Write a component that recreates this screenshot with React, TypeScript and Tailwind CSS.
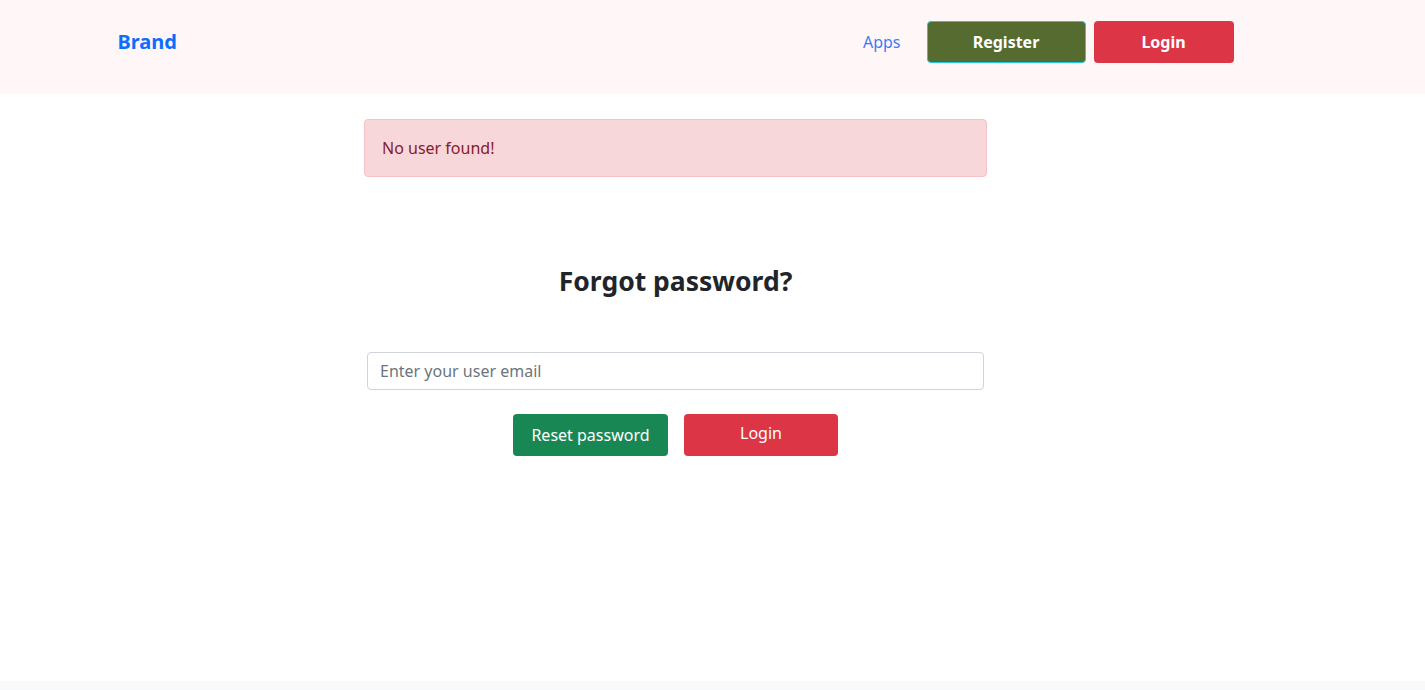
export default function App() {
  return (
    <div className="min-h-screen bg-white font-['Noto_Sans',sans-serif] text-[#212529]">
      {/* Navbar */}
      <header className="h-[94px] bg-[#fff7f7]">
        <div className="w-[1351px]">
          <div className="mx-auto flex w-[1140px] items-center justify-between px-[12px] pt-[21px]">
            <a href="#" className="text-[20px] font-bold text-[#0d6efd]">
              Brand
            </a>
            <nav className="flex items-center">
              <a href="#" className="mr-[26px] text-[16px] text-[#3b7cf5]">
                Apps
              </a>
              <button className="h-[42px] w-[159px] rounded-[4px] border border-[#1fc8e0] bg-[#556b2f] text-[16px] font-bold text-white">
                Register
              </button>
              <button className="ml-[8px] h-[42px] w-[140px] rounded-[4px] bg-[#dc3545] text-[16px] font-bold text-white">
                Login
              </button>
            </nav>
          </div>
        </div>
      </header>

      {/* Main */}
      <main className="h-[587px] w-[1351px]">
        <div className="mx-auto flex w-[623px] flex-col items-center pt-[25px]">
          <div className="w-full rounded-[4px] border border-[#f5c2c7] bg-[#f8d7da] px-[17px] py-[16px] text-[16px] leading-[24px] text-[#842029]">
            No user found!
          </div>

          <h3 className="mt-[88px] text-[26.5px] font-bold leading-[32px] text-[#212529]">
            Forgot password?
          </h3>

          <form className="mt-[55px] w-full px-[3px]" onSubmit={(e) => e.preventDefault()}>
            <input
              type="email"
              placeholder="Enter your user email"
              className="h-[38px] w-full rounded-[4px] border border-[#ced4da] px-[12px] text-[16px] text-[#212529] outline-none placeholder:text-[#6c757d]"
            />
            <div className="mt-[24px] flex justify-center gap-[16px]">
              <button
                type="submit"
                className="h-[42px] w-[155px] rounded-[4px] bg-[#198754] text-[16px] text-white"
              >
                Reset password
              </button>
              <button
                type="button"
                className="h-[42px] w-[154px] rounded-[4px] bg-[#dc3545] pb-[4px] text-[16px] text-white"
              >
                Login
              </button>
            </div>
          </form>
        </div>
      </main>

      {/* Footer */}
      <footer className="h-[40px] bg-[#f8f9fa]" />
    </div>
  );
}
